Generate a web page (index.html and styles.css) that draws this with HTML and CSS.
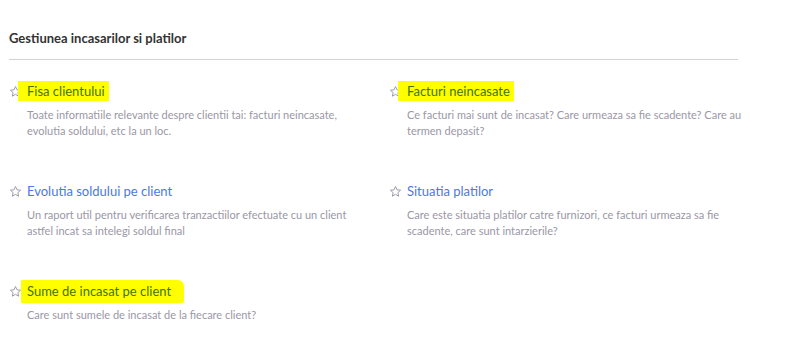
FILE: index.html
```html
<!DOCTYPE html>
<html lang="ro">
<head>
    <meta charset="UTF-8">
    <title>Gestiunea incasarilor si platilor</title>
    <link rel="stylesheet" href="styles.css">
</head>
<body>
    <div class="page">
        <h2 class="section-title">Gestiunea incasarilor si platilor</h2>
        <div class="reports">
            <div class="report">
                <div class="report-head">
                    <svg class="star" viewBox="0 0 24 24"><path d="M12 2.8l2.8 6.1 6.6.7-5 4.5 1.4 6.6L12 17.3l-5.8 3.4 1.4-6.6-5-4.5 6.6-.7z"/></svg>
                    <a class="report-link marked" href="#">Fisa clientului</a>
                </div>
                <p class="report-desc">Toate informatiile relevante despre clientii tai: facturi neincasate, evolutia soldului, etc la un loc.</p>
            </div>
            <div class="report">
                <div class="report-head">
                    <svg class="star" viewBox="0 0 24 24"><path d="M12 2.8l2.8 6.1 6.6.7-5 4.5 1.4 6.6L12 17.3l-5.8 3.4 1.4-6.6-5-4.5 6.6-.7z"/></svg>
                    <a class="report-link marked" href="#">Facturi neincasate</a>
                </div>
                <p class="report-desc">Ce facturi mai sunt de incasat? Care urmeaza sa fie scadente? Care au termen depasit?</p>
            </div>
            <div class="report">
                <div class="report-head">
                    <svg class="star" viewBox="0 0 24 24"><path d="M12 2.8l2.8 6.1 6.6.7-5 4.5 1.4 6.6L12 17.3l-5.8 3.4 1.4-6.6-5-4.5 6.6-.7z"/></svg>
                    <a class="report-link" href="#">Evolutia soldului pe client</a>
                </div>
                <p class="report-desc">Un raport util pentru verificarea tranzactiilor efectuate cu un client astfel incat sa intelegi soldul final</p>
            </div>
            <div class="report">
                <div class="report-head">
                    <svg class="star" viewBox="0 0 24 24"><path d="M12 2.8l2.8 6.1 6.6.7-5 4.5 1.4 6.6L12 17.3l-5.8 3.4 1.4-6.6-5-4.5 6.6-.7z"/></svg>
                    <a class="report-link" href="#">Situatia platilor</a>
                </div>
                <p class="report-desc">Care este situatia platilor catre furnizori, ce facturi urmeaza sa fie scadente, care sunt intarzierile?</p>
            </div>
            <div class="report last">
                <div class="report-head">
                    <svg class="star" viewBox="0 0 24 24"><path d="M12 2.8l2.8 6.1 6.6.7-5 4.5 1.4 6.6L12 17.3l-5.8 3.4 1.4-6.6-5-4.5 6.6-.7z"/></svg>
                    <a class="report-link marked wide" href="#">Sume de incasat pe client</a>
                </div>
                <p class="report-desc">Care sunt sumele de incasat de la fiecare client?</p>
            </div>
        </div>
    </div>
</body>
</html>
```

FILE: styles.css
```css
body {
    margin: 0;
    background: #fff;
    font-family: 'Lato', 'Open Sans', sans-serif;
}
.page {
    padding: 30px 0 0 9px;
}
.section-title {
    margin: 0;
    width: 729px;
    padding-bottom: 13px;
    border-bottom: 1px solid #d3d3d3;
    font-size: 13px;
    line-height: 16px;
    font-weight: 700;
    color: #333;
}
.reports {
    display: grid;
    grid-template-columns: 380px 380px;
    padding-top: 22px;
}
.report {
    height: 100px;
}
.report.last {
    height: auto;
}
.report-head {
    display: flex;
    align-items: center;
    height: 18px;
}
.star {
    width: 13px;
    height: 13px;
    margin-right: 5px;
    fill: none;
    stroke: #9a9aa8;
    stroke-width: 1.8;
    stroke-linejoin: round;
}
.report-link {
    font-size: 13px;
    line-height: 18px;
    color: #4a78e6;
    text-decoration: none;
}
.marked {
    color: #3f7400;
    background: #ffff00;
    padding: 1px 4px 1px 9px;
    margin-left: -9px;
}
.wide {
    padding: 2px 13px 3px 6px;
    margin-left: -6px;
    border-radius: 1px 6px 2px 1px;
}
.report-desc {
    margin: 7px 0 0 18px;
    max-width: 340px;
    font-size: 11px;
    line-height: 16px;
    color: #9a97a6;
}
```
